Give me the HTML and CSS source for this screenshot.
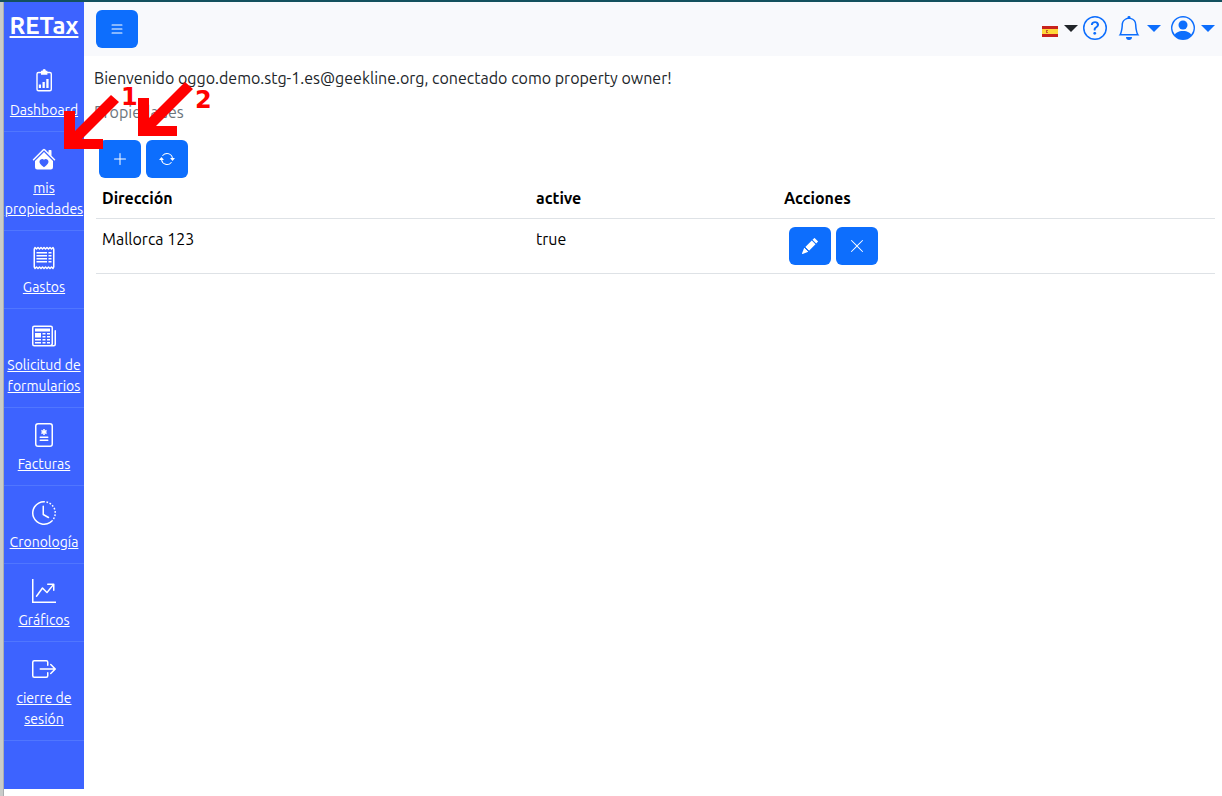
FILE: index.html
```html
<!DOCTYPE html>
<html lang="es">
<head>
<meta charset="utf-8">
<meta name="viewport" content="width=device-width, initial-scale=1">
<title>RETax</title>
<link rel="stylesheet" href="styles.css">
</head>
<body>
<div class="app">
  <aside class="sidebar">
    <a class="brand" href="#">RETax</a>
    <nav class="menu">
      <a class="item" href="#">
        <svg class="icon" viewBox="0 0 24 24"><rect x="5" y="3.500" width="14.300" height="18.300" rx="1.500" fill="none" stroke="currentColor" stroke-width="1.400"/><path d="M9 1.800h1.500a1.700 1.700 0 0 1 3.400 0h1.500v4H9zM6.800 15.500H9V19H6.800zM10.500 13h2.300v6h-2.300zM14.300 10h2.300v9h-2.300z"/></svg>
        <span>Dashboard</span></a>
      <a class="item" href="#">
        <svg class="icon" viewBox="0 0 16 16"><path d="M7.293 1.500a1 1 0 0 1 1.414 0L11 3.793V2.500a.5.5 0 0 1 .5-.5h1a.5.5 0 0 1 .5.5v3.293l2.354 2.353a.5.5 0 0 1-.708.708L8 2.207 1.354 8.854a.5.5 0 1 1-.708-.708z"/><path d="m14 9.293-6-6-6 6V13.500A1.500 1.500 0 0 0 3.500 15h9a1.500 1.500 0 0 0 1.500-1.500zm-6-.811c1.664-1.673 5.825 1.254 0 5.018-5.825-3.764-1.664-6.691 0-5.018"/></svg>
        <span>mis propiedades</span></a>
      <a class="item" href="#">
        <svg class="icon" viewBox="0 0 16 16"><path d="M1.920.506a.5.5 0 0 1 .434.140L3 1.293l.646-.647a.5.5 0 0 1 .708 0L5 1.293l.646-.647a.5.5 0 0 1 .708 0L7 1.293l.646-.647a.5.5 0 0 1 .708 0L9 1.293l.646-.647a.5.5 0 0 1 .708 0l.646.647.646-.647a.5.5 0 0 1 .708 0l.646.647.646-.647a.5.5 0 0 1 .801.130l.5 1A.5.5 0 0 1 15 2v12a.5.5 0 0 1-.053.224l-.5 1a.5.5 0 0 1-.8.130L13 14.707l-.646.647a.5.5 0 0 1-.708 0L11 14.707l-.646.647a.5.5 0 0 1-.708 0L9 14.707l-.646.647a.5.5 0 0 1-.708 0L7 14.707l-.646.647a.5.5 0 0 1-.708 0L5 14.707l-.646.647a.5.5 0 0 1-.708 0L3 14.707l-.646.647a.5.5 0 0 1-.801-.130l-.5-1A.5.5 0 0 1 1 14V2a.5.5 0 0 1 .053-.224l.5-1a.5.5 0 0 1 .367-.270m.217 1.338L2 2.118v11.764l.137.274.51-.510a.5.5 0 0 1 .707 0l.646.647.646-.646a.5.5 0 0 1 .708 0l.646.646.646-.646a.5.5 0 0 1 .708 0l.646.646.646-.646a.5.5 0 0 1 .708 0l.646.646.646-.646a.5.5 0 0 1 .708 0l.646.646.646-.646a.5.5 0 0 1 .708 0l.509.509.137-.274V2.118l-.137-.274-.51.510a.5.5 0 0 1-.707 0L12 1.707l-.646.647a.5.5 0 0 1-.708 0L10 1.707l-.646.647a.5.5 0 0 1-.708 0L8 1.707l-.646.647a.5.5 0 0 1-.708 0L6 1.707l-.646.647a.5.5 0 0 1-.708 0L4 1.707l-.646.647a.5.5 0 0 1-.708 0z"/><path d="M3 4h7v1H3zm0 2h7v1H3zm0 2h7v1H3zm0 2h7v1H3zM11 4h2v1h-2zm0 2h2v1h-2zm0 2h2v1h-2zm0 2h2v1h-2z"/></svg>
        <span>Gastos</span></a>
      <a class="item" href="#">
        <svg class="icon" viewBox="0 0 16 16"><path d="M0 2.500A1.500 1.500 0 0 1 1.500 1h11A1.500 1.500 0 0 1 14 2.500v10.528c0 .3-.05.654-.238.972h.738a.5.5 0 0 0 .5-.5v-9a.5.5 0 0 1 1 0v9a1.500 1.500 0 0 1-1.500 1.500H1.497A1.497 1.497 0 0 1 0 13.500zM12 14c.37 0 .654-.211.853-.441.092-.106.147-.279.147-.531V2.500a.5.5 0 0 0-.5-.5h-11a.5.5 0 0 0-.5.5v11c0 .278.223.5.497.5z"/><path d="M2 3h10v2H2zm0 3h4v3H2zm0 4h4v1H2zm0 2h4v1H2zm5-6h2v1H7zm3 0h2v1h-2zM7 8h2v1H7zm3 0h2v1h-2zm-3 2h2v1H7zm3 0h2v1h-2zm-3 2h2v1H7zm3 0h2v1h-2z"/></svg>
        <span>Solicitud de formularios</span></a>
      <a class="item" href="#">
        <svg class="icon" viewBox="0 0 16 16"><path d="M7.500 4h1v1.134l.982-.567.5.866L9 6l.982.567-.5.866L8.500 6.866V8h-1V6.866l-.982.567-.5-.866L7 6l-.982-.567.5-.866.982.567zM5.500 9h5a.5.5 0 0 1 0 1h-5a.5.5 0 0 1 0-1m0 2h5a.5.5 0 0 1 0 1h-5a.5.5 0 0 1 0-1"/><path d="M2 2a2 2 0 0 1 2-2h8a2 2 0 0 1 2 2v12a2 2 0 0 1-2 2H4a2 2 0 0 1-2-2zm2-1a1 1 0 0 0-1 1v12a1 1 0 0 0 1 1h8a1 1 0 0 0 1-1V2a1 1 0 0 0-1-1z"/></svg>
        <span>Facturas</span></a>
      <a class="item" href="#">
        <svg class="icon" viewBox="0 0 16 16"><path d="M8.515 1.019A7 7 0 0 0 8 1V0a8 8 0 0 1 .589.022zm2.004.450a7 7 0 0 0-.985-.299l.219-.976q.576.129 1.126.342zm1.370.710a7 7 0 0 0-.439-.270l.493-.870a8 8 0 0 1 .979.654l-.615.789a7 7 0 0 0-.418-.302zm1.834 1.790a7 7 0 0 0-.653-.796l.724-.690q.406.429.747.910zm.744 1.352a7 7 0 0 0-.214-.468l.893-.450a8 8 0 0 1 .450 1.088l-.950.313a7 7 0 0 0-.179-.483m.530 2.507a7 7 0 0 0-.100-1.025l.985-.170q.100.580.116 1.170zm-.131 1.538q.050-.254.081-.510l.993.123a8 8 0 0 1-.230 1.155l-.964-.267q.069-.247.120-.501m-.952 2.379q.276-.436.486-.908l.914.405q-.240.540-.555 1.038zm-.964 1.205q.183-.183.350-.378l.758.653a8 8 0 0 1-.401.432z"/><path d="M8 1a7 7 0 1 0 4.950 11.950l.707.707A8.001 8.001 0 1 1 8 0z"/><path d="M7.500 3a.5.5 0 0 1 .5.5v5.210l3.248 1.856a.5.5 0 0 1-.496.868l-3.500-2A.5.5 0 0 1 7 9V3.500a.5.5 0 0 1 .5-.5"/></svg>
        <span>Cronología</span></a>
      <a class="item" href="#">
        <svg class="icon" viewBox="0 0 16 16"><path fill-rule="evenodd" d="M0 0h1v15h15v1H0zm10 3.500a.5.5 0 0 1 .5-.5h4a.5.5 0 0 1 .5.5v4a.5.5 0 0 1-1 0V4.900l-3.613 4.417a.5.5 0 0 1-.740.037L7.060 6.767l-3.656 5.027a.5.5 0 0 1-.808-.588l4-5.500a.5.5 0 0 1 .758-.060l2.609 2.610L13.445 4H10.500a.5.5 0 0 1-.5-.5"/></svg>
        <span>Gráficos</span></a>
      <a class="item" href="#">
        <svg class="icon" viewBox="0 0 16 16"><path d="M10 12.500a.5.5 0 0 1-.5.5h-8a.5.5 0 0 1-.5-.5v-9a.5.5 0 0 1 .5-.5h8a.5.5 0 0 1 .5.5v2a.5.5 0 0 0 1 0v-2A1.500 1.500 0 0 0 9.500 2h-8A1.500 1.500 0 0 0 0 3.500v9A1.500 1.500 0 0 0 1.500 14h8a1.500 1.500 0 0 0 1.500-1.500v-2a.5.5 0 0 0-1 0z"/><path d="M15.854 8.354a.5.5 0 0 0 0-.708l-3-3a.5.5 0 0 0-.708.708L14.293 7.500H5.500a.5.5 0 0 0 0 1h8.793l-2.147 2.146a.5.5 0 0 0 .708.708z"/></svg>
        <span>cierre de sesión</span></a>
    </nav>
  </aside>

  <div class="page">
    <header class="topbar">
      <button class="btn" type="button" aria-label="Menú"><svg viewBox="0 0 16 16"><path d="M2.500 12a.5.5 0 0 1 .5-.5h10a.5.5 0 0 1 0 1H3a.5.5 0 0 1-.5-.5m0-4a.5.5 0 0 1 .5-.5h10a.5.5 0 0 1 0 1H3a.5.5 0 0 1-.5-.5m0-4a.5.5 0 0 1 .5-.5h10a.5.5 0 0 1 0 1H3a.5.5 0 0 1-.5-.5"/></svg></button>
      <div class="tools">
        <button class="tool lang" type="button" aria-label="Idioma">
          <svg class="flag" viewBox="0 0 16 11"><path fill="#c8231c" d="M0 0h16v11H0z"/><path fill="#ffd83a" d="M0 3h16v5H0z"/><path fill="#c75a2b" d="M4 4h2v1H5v1h1v1H4z"/></svg>
          <svg class="caret" viewBox="0 0 14 7"><path d="M0 0h14L7 7z"/></svg>
        </button>
        <button class="tool help" type="button" aria-label="Ayuda">
          <svg class="icon" viewBox="0 0 16 16"><path d="M8 15A7 7 0 1 1 8 1a7 7 0 0 1 0 14m0 1A8 8 0 1 0 8 0a8 8 0 0 0 0 16"/><path d="M5.255 5.786a.237.237 0 0 0 .241.247h.825c.138 0 .248-.113.266-.250.090-.656.540-1.134 1.342-1.134.686 0 1.314.343 1.314 1.168 0 .635-.374.927-.965 1.371-.673.489-1.206 1.060-1.168 1.987l.003.217a.25.25 0 0 0 .25.246h.811a.25.25 0 0 0 .25-.25v-.105c0-.718.273-.927 1.010-1.486.609-.463 1.244-.977 1.244-2.056 0-1.511-1.276-2.241-2.673-2.241-1.267 0-2.655.590-2.750 2.286m1.557 5.763c0 .533.425.927 1.010.927.609 0 1.028-.394 1.028-.927 0-.552-.420-.940-1.029-.940-.584 0-1.009.388-1.009.940"/></svg>
        </button>
        <button class="tool" type="button" aria-label="Notificaciones">
          <svg class="icon" viewBox="0 0 16 16"><path d="M8 16a2 2 0 0 0 2-2H6a2 2 0 0 0 2 2M8 1.918l-.797.161A4 4 0 0 0 4 6c0 .628-.134 2.197-.459 3.742-.160.767-.376 1.566-.663 2.258h10.244c-.287-.692-.502-1.490-.663-2.258C12.134 8.197 12 6.628 12 6a4 4 0 0 0-3.203-3.920zM14.220 12c.223.447.481.801.780 1H1c.299-.199.557-.553.780-1C2.680 10.200 3 6.880 3 6c0-2.420 1.720-4.440 4.005-4.901a1 1 0 1 1 1.990 0A5 5 0 0 1 13 6c0 .880.320 4.200 1.220 6"/></svg>
          <svg class="caret" viewBox="0 0 14 7"><path d="M0 0h14L7 7z"/></svg>
        </button>
        <button class="tool" type="button" aria-label="Usuario">
          <svg class="icon" viewBox="0 0 16 16"><path d="M11 6a3 3 0 1 1-6 0 3 3 0 0 1 6 0"/><path fill-rule="evenodd" d="M0 8a8 8 0 1 1 16 0A8 8 0 0 1 0 8m8-7a7 7 0 0 0-5.468 11.370C3.242 11.226 4.805 10 8 10s4.757 1.225 5.468 2.370A7 7 0 0 0 8 1"/></svg>
          <svg class="caret" viewBox="0 0 14 7"><path d="M0 0h14L7 7z"/></svg>
        </button>
      </div>
    </header>

    <main class="content">
      <p class="welcome">Bienvenido oggo.demo.stg-1.es@geekline.org, conectado como property owner!</p>
      <p class="crumb">Propiedades</p>
      <div class="actions">
        <button class="btn" type="button" aria-label="Añadir"><svg viewBox="0 0 16 16"><path d="M8 2a.5.5 0 0 1 .5.5v5h5a.5.5 0 0 1 0 1h-5v5a.5.5 0 0 1-1 0v-5h-5a.5.5 0 0 1 0-1h5v-5A.5.5 0 0 1 8 2"/></svg></button>
        <button class="btn" type="button" aria-label="Actualizar"><svg viewBox="0 0 16 16"><path d="M11.534 7h3.932a.25.25 0 0 1 .192.410l-1.966 2.360a.25.25 0 0 1-.384 0l-1.966-2.360a.25.25 0 0 1 .192-.410m-11 2h3.932a.25.25 0 0 0 .192-.410L2.692 6.230a.25.25 0 0 0-.384 0L.342 8.590A.25.25 0 0 0 .534 9"/><path fill-rule="evenodd" d="M8 3c-1.552 0-2.940.707-3.857 1.818a.5.5 0 1 1-.771-.636A6.002 6.002 0 0 1 13.917 7H12.900A5 5 0 0 0 8 3M3.100 9a5.002 5.002 0 0 0 8.757 2.182.5.5 0 1 1 .771.636A6.002 6.002 0 0 1 2.083 9z"/></svg></button>
      </div>
      <table class="list">
        <thead>
          <tr><th class="col-address">Dirección</th><th class="col-active">active</th><th>Acciones</th></tr>
        </thead>
        <tbody>
          <tr><td>Mallorca 123</td><td>true</td><td>
            <div class="actions row-actions">
              <button class="btn" type="button" aria-label="Editar"><svg viewBox="0 0 16 16"><path d="M12.854.146a.5.5 0 0 0-.707 0L10.500 1.793 14.207 5.500l1.647-1.646a.5.5 0 0 0 0-.708zm.646 6.061L9.793 2.500 3.293 9H3.500a.5.5 0 0 1 .5.5v.5h.5a.5.5 0 0 1 .5.5v.5h.5a.5.5 0 0 1 .5.5v.5h.5a.5.5 0 0 1 .5.5v.207zm-7.468 7.468A.5.5 0 0 1 6 13.500V13h-.5a.5.5 0 0 1-.5-.5V12h-.5a.5.5 0 0 1-.5-.5V11h-.5a.5.5 0 0 1-.5-.5V10h-.5a.5.5 0 0 1-.175-.032l-.179.178a.5.5 0 0 0-.110.168l-2 5a.5.5 0 0 0 .650.650l5-2a.5.5 0 0 0 .168-.110z"/></svg></button>
              <button class="btn" type="button" aria-label="Eliminar"><svg viewBox="0 0 16 16"><path d="M2.146 2.854a.5.5 0 1 1 .708-.708L8 7.293l5.146-5.147a.5.5 0 0 1 .708.708L8.707 8l5.147 5.146a.5.5 0 0 1-.708.708L8 8.707l-5.146 5.147a.5.5 0 0 1-.708-.708L7.293 8z"/></svg></button>
            </div>
          </td></tr>
        </tbody>
      </table>
    </main>
  </div>

  <div class="step step-one"><svg viewBox="0 0 55 55"><path d="M0 16h11v20L47 0l8 7-37 37h21v10H0z"/></svg><span>1</span></div>
  <div class="step step-two"><svg viewBox="0 0 55 55"><path d="M0 16h11v20L47 0l8 7-37 37h21v10H0z"/></svg><span>2</span></div>
</div>
</body>
</html>
```
FILE: styles.css
```css
*, *::before { box-sizing: border-box; }

body {
  margin: 0;
  font-family: Ubuntu, "Noto Sans", sans-serif;
  font-size: 16px;
  line-height: 24px;
  color: #212529;
  background: #fff;
}

svg { display: block; fill: currentColor; }

.app {
  position: relative;
  display: flex;
  min-height: 100vh;
  border-top: 2px solid #13505e;
}

.app::before {
  content: "";
  flex: none;
  width: 4px;
  background: #c9cbc9;
  border-right: 1px solid #aaadb0;
}

.sidebar {
  flex: none;
  width: 80px;
  margin-bottom: 7px;
  background: #3d63ff;
  color: #fff;
  text-align: center;
}

.brand {
  display: block;
  padding: 8px 0 12px;
  font-size: 24px;
  font-weight: 700;
  line-height: 32px;
  color: inherit;
}

.menu { display: flex; flex-direction: column; }

.item {
  display: flex;
  flex-direction: column;
  align-items: center;
  gap: 7px;
  padding: 15px 0 10px;
  border-bottom: 1px solid #5076ff;
  font-size: 14px;
  line-height: 21px;
  color: inherit;
}

.icon { width: 24px; height: 24px; }

.page { flex: 1; min-width: 0; }

.topbar {
  display: flex;
  align-items: center;
  justify-content: space-between;
  padding: 8px 7px 8px 12px;
  background: #f8f9fc;
}

.btn {
  display: flex;
  align-items: center;
  justify-content: center;
  width: 42px;
  height: 38px;
  padding: 0;
  border: 0;
  border-radius: 6px;
  background: #0d6efd;
  color: #fff;
  cursor: pointer;
}

.btn svg { width: 16px; height: 16px; }

.tools { display: flex; align-items: center; gap: 10px; padding-bottom: 2px; }

.tool {
  display: flex;
  align-items: center;
  gap: 6px;
  padding: 0;
  border: 0;
  background: none;
  color: #0d6efd;
  cursor: pointer;
}

.lang { color: #212529; margin-right: -5px; }

.flag { width: 16px; height: 11px; margin-top: 6px; }

.caret { width: 14px; height: 7px; }

.content { padding: 10px 7px 0 12px; }

.welcome, .crumb { margin: 0 -2px 10px; }

.crumb { color: #6c757d; margin-bottom: 16px; }

.actions { display: flex; gap: 5px; padding-left: 3px; }

.row-actions { padding-left: 5px; }

.list {
  width: 100%;
  border-collapse: collapse;
  table-layout: fixed;
  color: #000;
}

.list th, .list td {
  padding: 8px 6px;
  border-bottom: 1px solid #dee2e6;
  text-align: left;
  vertical-align: top;
}

.list .col-address { width: 434px; }

.list .col-active { width: 248px; }

/* Numbered arrows drawn over the page */
.step {
  position: absolute;
  display: flex;
  gap: 2px;
  color: #f00;
  pointer-events: none;
  font: 700 24px/24px "DejaVu Sans", sans-serif;
}

.step svg { width: 55px; height: 55px; }

.step-one { left: 64px; top: 93px; }

.step-two { left: 138px; top: 80px; }

.step-one span { margin-top: -10px; }

.step-two span { margin-top: 6px; }
```
